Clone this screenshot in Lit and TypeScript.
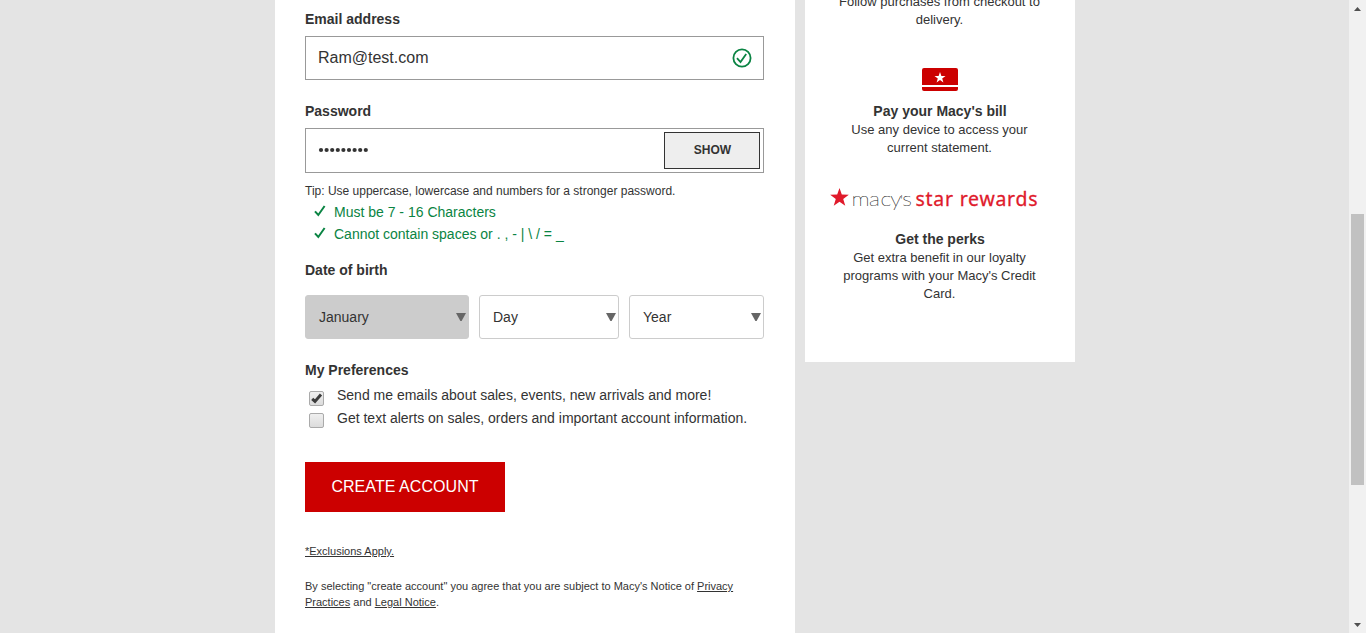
import { LitElement, html, css, svg } from "lit";
import { customElement, property } from "lit/decorators.js";

const STAR = "M0 -10 L2.35 -3.24 L9.51 -3.09 L3.8 1.24 L5.88 8.09 L0 4 L-5.88 8.09 L-3.8 1.24 L-9.51 -3.09 L-2.35 -3.24 Z";
const tick = svg`<path d="M1 6.3 L4.3 10 L10.6 1" fill="none" stroke="#0a8443" stroke-width="2"></path>`;

@customElement("select-box")
class SelectBox extends LitElement {
  @property() label = "";
  static styles = css`
    :host { display: flex; box-sizing: border-box; height: 44px; align-items: center; justify-content: space-between; border: 1px solid #ccc; border-radius: 3px; padding: 0 2px 0 13px; background: #fff; }
    :host([filled]) { background: #ccc; }
    svg { display: block; }
  `;
  render() {
    return html`<span>${this.label}</span><svg width="10" height="8" viewBox="0 0 10 8"><path d="M0 0H10L5.6 8H4.4Z" fill="#666"></path></svg>`;
  }
}

@customElement("check-row")
class CheckRow extends LitElement {
  @property({ type: Boolean }) checked = false;
  static styles = css`
    :host { display: flex; height: 22px; padding-left: 4px; gap: 13px; }
    .box { box-sizing: border-box; width: 15px; height: 15px; margin-top: 5px; flex: none; border: 1px solid #aaa; border-radius: 2px; background: linear-gradient(#efefef, #dcdcdc); }
    .box svg { display: block; }
    .text { white-space: nowrap; line-height: 18px; }
  `;
  render() {
    return html`<span class="box">${this.checked
      ? html`<svg width="13" height="13" viewBox="0 0 13 13"><path d="M2.2 6.8 L5 9.4 L11 2.6" fill="none" stroke="#3c3c3c" stroke-width="3"></path></svg>`
      : ""}</span><span class="text"><slot></slot></span>`;
  }
}

@customElement("app-root")
class AppRoot extends LitElement {
  static styles = css`
    :host { display: flex; box-sizing: border-box; width: 1366px; height: 633px; overflow: hidden; background: #e4e4e4; color: #333; font: 14px/18px "Liberation Sans", Arial, sans-serif; }
    .page { flex: 1; display: flex; align-items: flex-start; gap: 10px; padding-left: 275px; }
    .form { box-sizing: border-box; width: 520px; height: 633px; background: #fff; padding: 10px 31px 0 30px; }
    .label { font-weight: bold; height: 18px; }
    .field { box-sizing: border-box; display: flex; align-items: center; justify-content: space-between; border: 1px solid #999; margin-top: 8px; padding-left: 12px; font-size: 16px; }
    .email { height: 44px; padding-right: 11px; margin-bottom: 22px; }
    .password { height: 45px; padding-right: 3px; }
    .dots { padding-bottom: 2px; }
    .show { box-sizing: border-box; width: 96px; height: 37px; padding-left: 1px; border: 1px solid #333; background: #eee; font-size: 12px; font-weight: bold; text-align: center; line-height: 34px; }
    .tip { font-size: 12px; margin-top: 9px; }
    .rules { color: #0a8443; margin: 1px 0 16px; line-height: 22px; }
    .rule { display: flex; gap: 8px; padding-left: 9px; }
    .rule svg { margin-top: 4px; }
    .dates { display: grid; grid-template-columns: 164px 140px 135px; gap: 10px; margin: 16px 0 22px; }
    .checks { margin: 7px 0 32px; }
    .second { line-height: 20px; }
    .create { width: 200px; height: 50px; background: #c00; color: #fff; font-size: 16px; letter-spacing: .06px; line-height: 49px; text-align: center; }
    .small { font-size: 11px; line-height: 16px; }
    .exclusions { margin: 31px 0 19px; }
    .side { box-sizing: border-box; width: 270px; height: 362px; background: #fff; text-align: center; font-size: 13px; }
    .copy { padding: 1px 1px 0 0; }
    .follow { margin-top: -8px; }
    .card { display: block; margin: 39px auto 11px 117px; }
    .logo { display: block; overflow: visible; margin: 28px 0 17px 25px; }
    .title { font-size: 14px; font-weight: bold; }
    .scroll { width: 17px; box-sizing: border-box; background: #f1f1f1; display: flex; flex-direction: column; align-items: center; padding: 7px 0 6px; }
    .thumb { width: 13px; height: 271px; background: #c1c1c1; margin: 203px 0 auto; }
    .scroll svg { display: block; }
  `;
  render() {
    return html`
      <div class="page">
        <div class="form">
          <div class="label">Email address</div>
          <div class="field email"><span>Ram@test.com</span>
            <svg width="20" height="20" viewBox="0 0 20 20"><circle cx="10" cy="10" r="8.6" fill="none" stroke="#0a8443" stroke-width="1.8"></circle><path d="M5 10.2 L8.5 14 L14.2 6" fill="none" stroke="#0a8443" stroke-width="1.8"></path></svg>
          </div>
          <div class="label">Password</div>
          <div class="field password">
            <svg class="dots" width="52" height="8" viewBox="0 0 52 8">${Array.from({ length: 9 }, (_, i) => svg`<circle cx=${3 + i * 5.6} cy="4" r="2.1" fill="#333"></circle>`)}</svg>
            <div class="show">SHOW</div>
          </div>
          <div class="tip">Tip: Use uppercase, lowercase and numbers for a stronger password.</div>
          <div class="rules">
            <div class="rule"><svg width="12" height="12" viewBox="0 0 12 12">${tick}</svg><span>Must be 7 - 16 Characters</span></div>
            <div class="rule"><svg width="12" height="12" viewBox="0 0 12 12">${tick}</svg><span>Cannot contain spaces or . , - | \\ / = _</span></div>
          </div>
          <div class="label">Date of birth</div>
          <div class="dates">
            <select-box label="January" filled></select-box>
            <select-box label="Day"></select-box>
            <select-box label="Year"></select-box>
          </div>
          <div class="label">My Preferences</div>
          <div class="checks">
            <check-row checked>Send me emails about sales, events, new arrivals and more!</check-row>
            <check-row><span class="second">Get text alerts on sales, orders and important account information.</span></check-row>
          </div>
          <div class="create">CREATE ACCOUNT</div>
          <div class="small exclusions"><u>*Exclusions Apply.</u></div>
          <div class="small">By selecting "create account" you agree that you are subject to Macy's Notice of <u>Privacy</u><br><u>Practices</u> and <u>Legal Notice</u>.</div>
        </div>
        <div class="side">
          <div class="copy follow">Follow purchases from checkout to<br>delivery.</div>
          <svg class="card" width="36" height="23" viewBox="0 0 36 23"><path d="M2 0H34Q36 0 36 2V17H0V2Q0 0 2 0ZM0 19H36V21Q36 23 34 23H2Q0 23 0 21Z" fill="#c00"></path><path d=${STAR} transform="translate(18 9.8) scale(.58)" fill="#fff"></path></svg>
          <div class="title">Pay your Macy's bill</div>
          <div class="copy">Use any device to access your<br>current statement.</div>
          <svg class="logo" width="220" height="28" viewBox="0 0 220 28">
            <path d=${STAR} transform="translate(9.5 12.8) scale(.98)" fill="#e01a2b"></path>
            <text transform="translate(21.5 21) scale(1.12 1)" x="0 15.6 25.8 34.6 43.2 45.4" y="0" font-family="Lato" font-weight="100" font-size="20.5" fill="#222" stroke="#222" stroke-width=".2">macy<tspan font-size="15">'</tspan>s</text>
            <text transform="translate(85.5 21) scale(.95 1)" font-family="Noto Sans" font-weight="400" font-size="20.5" fill="#e01a2b" stroke="#e01a2b" stroke-width=".3" textLength="128.5" lengthAdjust="spacing">star rewards</text>
          </svg>
          <div class="title">Get the perks</div>
          <div class="copy">Get extra benefit in our loyalty<br>programs with your Macy's Credit<br>Card.</div>
        </div>
      </div>
      <div class="scroll">
        <svg width="7" height="4" viewBox="0 0 7 4"><path d="M0 4L3.5 0L7 4Z" fill="#505050"></path></svg>
        <div class="thumb"></div>
        <svg width="7" height="4" viewBox="0 0 7 4"><path d="M0 0L3.5 4L7 0Z" fill="#505050"></path></svg>
      </div>`;
  }
}
